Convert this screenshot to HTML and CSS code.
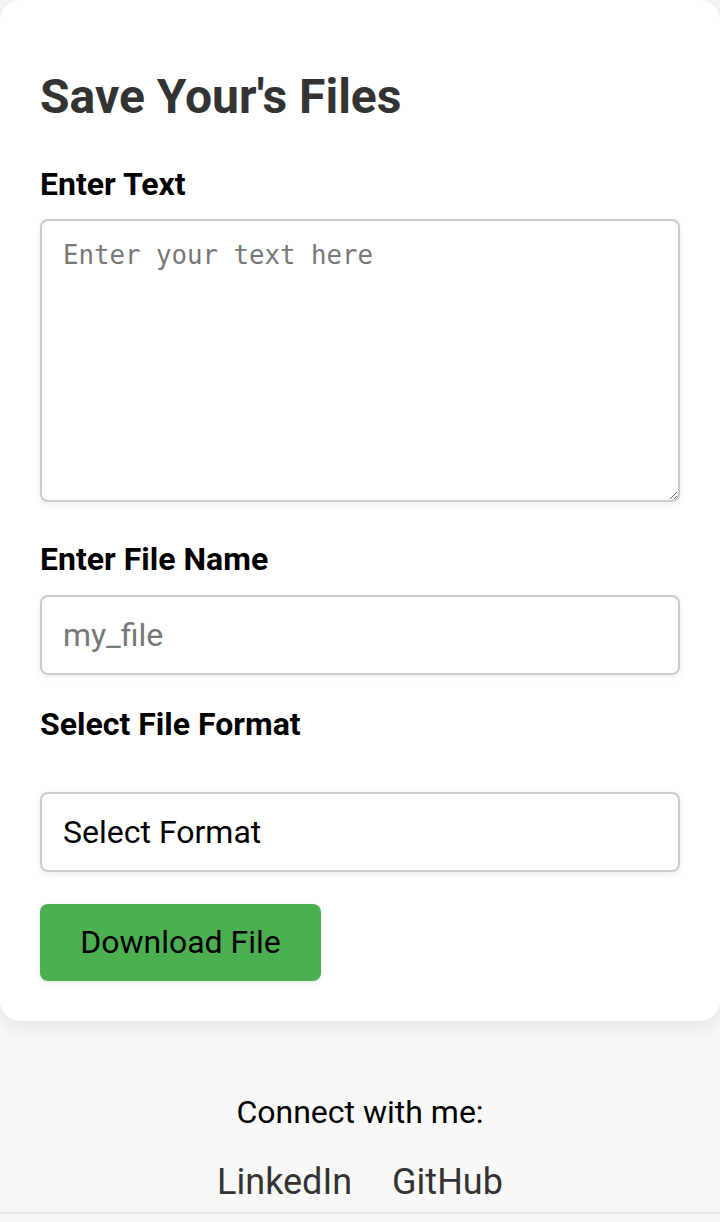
FILE: index.html
```html
<!DOCTYPE html>
<html lang="en">
<head>
<meta charset="utf-8">
<title>Save Your's Files</title>
<link rel="stylesheet" href="styles.css">
</head>
<body>
<main class="card">
  <h1 class="title">Save Your's Files</h1>
  <label class="label label-text" for="text">Enter Text</label>
  <textarea id="text" class="textarea" placeholder="Enter your text here"></textarea>
  <label class="label" for="name">Enter File Name</label>
  <input id="name" class="field field-name" type="text" placeholder="my_file">
  <label class="label label-select" for="format">Select File Format</label>
  <div id="format" class="field select">Select Format</div>
  <button class="btn" type="button">Download File</button>
</main>
<footer class="footer">
  <p class="connect">Connect with me:</p>
  <nav class="links">
    <a class="link" href="#">LinkedIn</a>
    <a class="link" href="#">GitHub</a>
  </nav>
</footer>
</body>
</html>
```

FILE: styles.css
```css
* { box-sizing: border-box; }
html, body { margin: 0; padding: 0; }
body {
  background: #f8f8f8;
  font-family: Roboto, "Liberation Sans", sans-serif;
  width: 720px;
  height: 1222px;
  overflow: hidden;
}
.card {
  background: #fff;
  border-radius: 20px;
  box-shadow: 0 4px 22px rgba(0,0,0,0.10);
  padding: 68px 40px 40px;
  display: flex;
  flex-direction: column;
  align-items: flex-start;
}
.title {
  margin: 0 0 39px;
  font-size: 48px;
  font-weight: 700;
  color: #333;
  line-height: 1.2;
}
.label {
  font-size: 32px;
  font-weight: 700;
  color: #000;
  line-height: 1.2;
  margin-bottom: 17px;
}
.label-text { margin-bottom: 16px; }
.label-select { margin-bottom: 48px; }
.textarea {
  width: 640px;
  height: 283px;
  border: 2px solid #ccc;
  border-radius: 8px;
  box-shadow: 0 2px 6px rgba(0,0,0,0.08);
  padding: 19px 21px;
  font-family: "DejaVu Sans Mono", monospace;
  font-size: 25.75px;
  resize: vertical;
  margin: 0 0 38px;
  outline: none;
}
.textarea::placeholder { color: #777; }
.field {
  width: 640px;
  height: 80px;
  border: 2px solid #ccc;
  border-radius: 8px;
  box-shadow: 0 2px 6px rgba(0,0,0,0.08);
  padding: 0 21px;
  font-family: Roboto, "Liberation Sans", sans-serif;
  font-size: 32px;
  color: #000;
  margin: 0 0 32px;
  outline: none;
  background: #fff;
}
.field-name { margin-bottom: 30px; }
.field::placeholder { color: #777; }
.select {
  display: flex;
  align-items: center;
}
.btn {
  width: 281px;
  height: 77px;
  background: #4caf50;
  border: none;
  border-radius: 8px;
  color: #000;
  font-family: Roboto, "Liberation Sans", sans-serif;
  font-size: 32px;
  box-shadow: 0 2px 6px rgba(0,0,0,0.08);
}
.footer {
  border-bottom: 2px solid #e6e6e6;
  text-align: center;
  padding: 72px 0 8px;
}
.connect {
  margin: 0 0 30px;
  font-size: 32px;
  color: #000;
  line-height: 1.2;
}
.links {
  display: flex;
  justify-content: center;
  gap: 40px;
}
.link {
  font-size: 36px;
  color: #333;
  text-decoration: none;
  line-height: 1.2;
}
```
